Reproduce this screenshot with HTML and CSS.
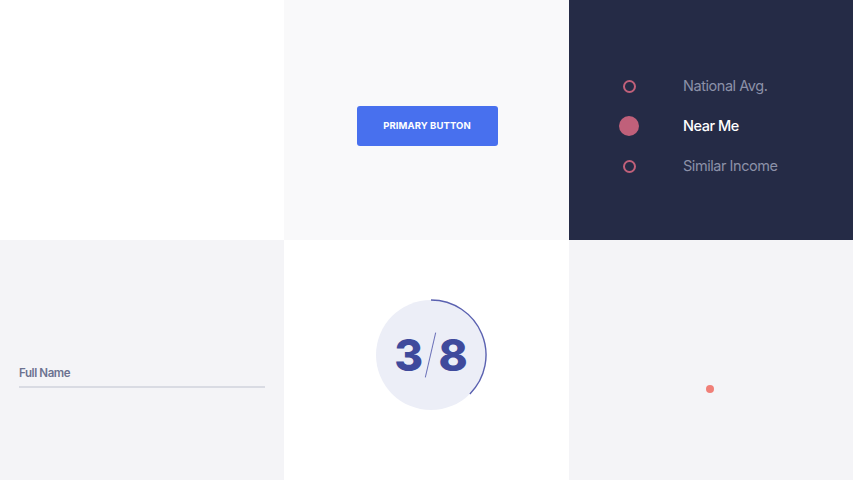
FILE: index.html
```html
<!DOCTYPE html>
<html>
<head>
<meta charset="utf-8">
<link rel="stylesheet" href="styles.css">
</head>
<body>
<div class="grid">
  <div class="cell c1"></div>
  <div class="cell c2">
    <button class="btn">PRIMARY BUTTON</button>
  </div>
  <div class="cell c3">
    <ul class="radios">
      <li class="opt"><span class="ring"></span><span class="lbl">National Avg.</span></li>
      <li class="opt active"><span class="ring"></span><span class="lbl">Near Me</span></li>
      <li class="opt"><span class="ring"></span><span class="lbl">Similar Income</span></li>
    </ul>
  </div>
  <div class="cell c4">
    <div class="field">
      <div class="field-label">Full Name</div>
      <div class="field-line"></div>
    </div>
  </div>
  <div class="cell c5">
    <div class="progress">
      <svg class="arc" width="114" height="114" viewBox="0 0 114 114">
        <circle cx="57" cy="57" r="55" fill="#eceef7"/>
        <path d="M57 2 A55 55 0 0 1 95.9 95.9" fill="none" stroke="#5a61b0" stroke-width="1.4"/>
      </svg>
      <div class="count"><span class="num">3</span><span class="slash"></span><span class="num">8</span></div>
    </div>
  </div>
  <div class="cell c6">
    <span class="dot"></span>
  </div>
</div>
</body>
</html>
```
FILE: styles.css
```css
html, body { margin: 0; padding: 0; }
body { width: 853px; height: 480px; overflow: hidden; font-family: "Inter", "Lato", sans-serif; }
.grid {
  display: grid;
  grid-template-columns: 284px 285px 284px;
  grid-template-rows: 240px 240px;
  width: 853px;
  height: 480px;
}
.cell { position: relative; }
.c1 { background: #ffffff; }
.c2 { background: #f9f9fa; display: flex; align-items: center; justify-content: center; }
.c3 { background: #252b46; }
.c4 { background: #f4f4f7; }
.c5 { background: #ffffff; display: flex; align-items: center; justify-content: center; }
.c6 { background: #f4f4f7; }

.btn {
  width: 141px; height: 40px;
  margin-top: 11px; margin-left: 1px;
  background: #4870ee;
  border: none; border-radius: 3px;
  color: #fff;
  font-family: "Inter", sans-serif;
  font-weight: 700; font-size: 9.5px;
  letter-spacing: 0.1px;
  padding: 0;
}

.radios { list-style: none; margin: 0; padding: 66px 0 0 0; }
.opt { display: flex; align-items: center; height: 40px; }
.ring {
  box-sizing: border-box;
  width: 13px; height: 13px;
  border: 2px solid #c0607a;
  border-radius: 50%;
  margin-left: 54px;
  margin-right: 47px;
  flex: none;
}
.active .ring {
  width: 20px; height: 20px;
  border: none;
  background: #c0607a;
  margin-left: 50px;
  margin-right: 44px;
}
.lbl { color: #8c91a8; font-size: 14.5px; font-weight: 400; letter-spacing: -0.45px; margin-top: -2px; }
.active .lbl { color: #ffffff; font-weight: 500; }

.field { padding: 126px 19px 0 19px; }
.field-label { color: #6c7290; font-size: 11.5px; font-weight: 600; line-height: 15px; letter-spacing: -0.4px; }
.field-line { height: 2px; background: #d9dbe3; margin-top: 5px; width: 246px; }

.progress { position: relative; width: 114px; height: 114px; margin: 0 0 10px 9px; }
.arc { display: block; }
.count {
  position: absolute; inset: 0;
  display: flex; align-items: center; justify-content: center;
  color: #3f4a9c;
  font-family: "Inter", sans-serif;
  font-weight: 800; font-size: 44px;
}
.num { line-height: 1; }
.slash {
  display: inline-block;
  width: 1.2px; height: 46px;
  background: #6a70b8;
  transform: rotate(13deg);
  margin: 0 7px;
}

.dot {
  position: absolute;
  left: 137px; top: 145px;
  width: 8px; height: 8px;
  border-radius: 50%;
  background: #f07f78;
}
```
